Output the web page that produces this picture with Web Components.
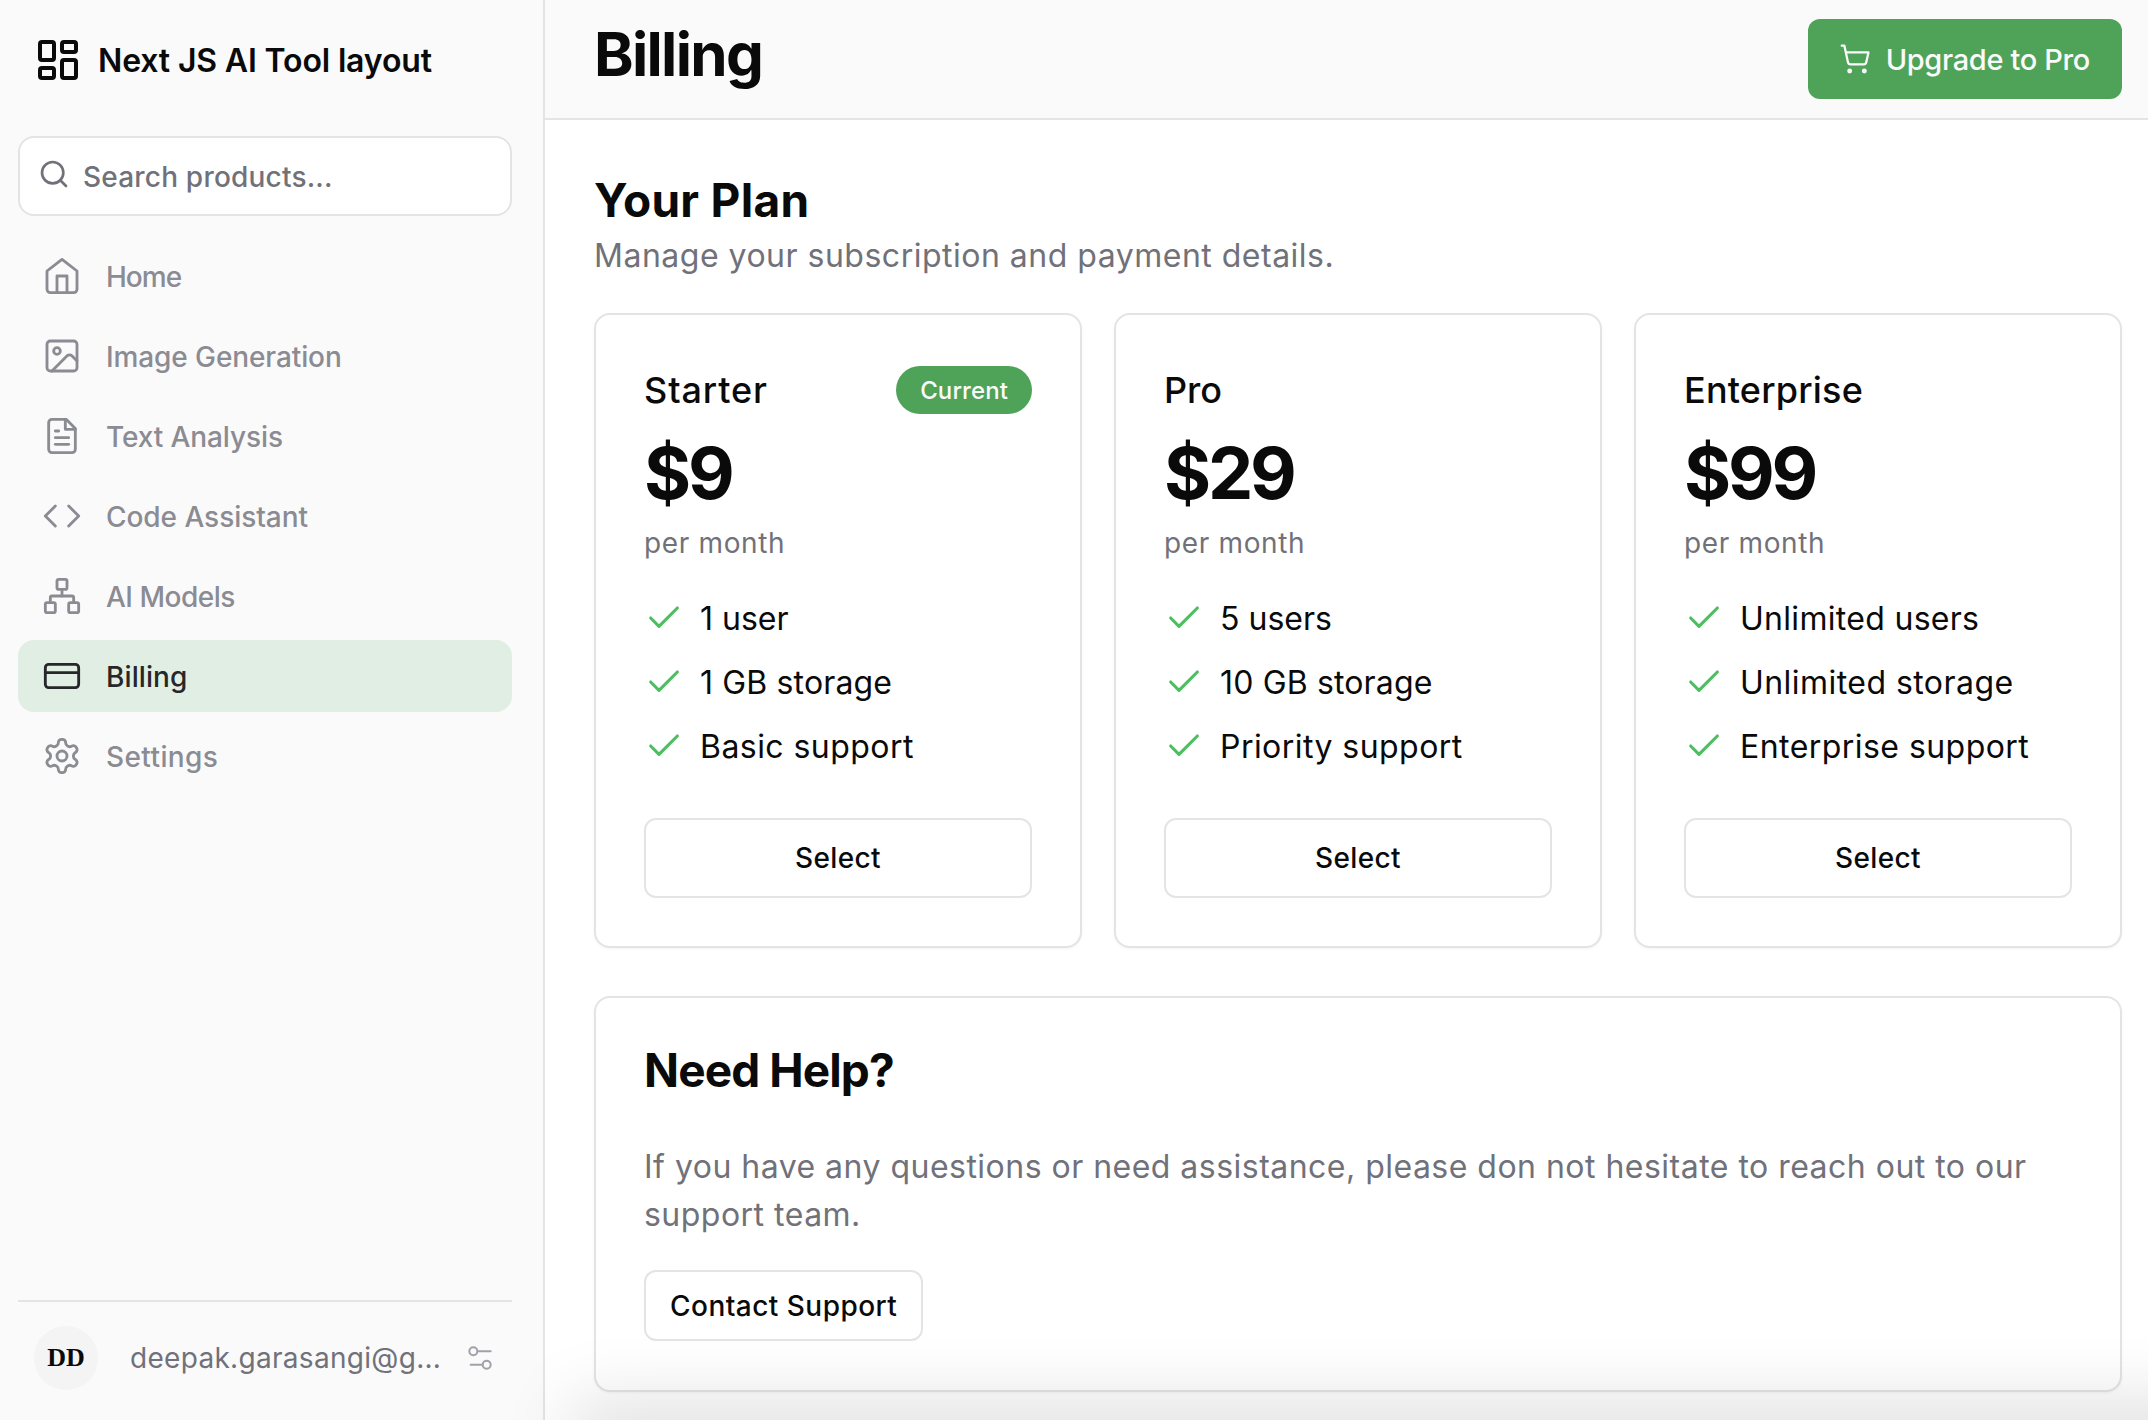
<!DOCTYPE html>
<html>
<head>
<meta charset="utf-8">
<title>Billing</title>
<style>
  html, body { margin: 0; height: 100%; }
  body { font-family: Inter, "Noto Sans", sans-serif; color: #0a0a0a; background: #fff; }
</style>
</head>
<body>
<app-shell>
  <side-bar slot="side">
    <nav-item icon="home" style="--ls:-1px">Home</nav-item>
    <nav-item icon="image" style="--ls:-.1px">Image Generation</nav-item>
    <nav-item icon="file" style="--ls:-.1px">Text Analysis</nav-item>
    <nav-item icon="code" style="--ls:-.05px">Code Assistant</nav-item>
    <nav-item icon="network" style="--ls:-.5px">AI Models</nav-item>
    <nav-item icon="card" active style="--ls:.1px">Billing</nav-item>
    <nav-item icon="gear" style="--ls:.4px">Settings</nav-item>
  </side-bar>
  <page-header slot="head" title="Billing"></page-header>
  <section-title>
    <span slot="title">Your Plan</span>
    Manage your subscription and payment details.
  </section-title>
  <plan-grid>
    <plan-card name="Starter" price="$9" current style="--name-ls:.9px">
      <plan-feature style="--ls:0">1 user</plan-feature>
      <plan-feature style="--ls:.15px">1 GB storage</plan-feature>
      <plan-feature>Basic support</plan-feature>
    </plan-card>
    <plan-card name="Pro" price="$29" style="--name-ls:0">
      <plan-feature style="--ls:0">5 users</plan-feature>
      <plan-feature style="--ls:.15px">10 GB storage</plan-feature>
      <plan-feature>Priority support</plan-feature>
    </plan-card>
    <plan-card name="Enterprise" price="$99" style="--name-ls:.2px">
      <plan-feature style="--ls:.3px">Unlimited users</plan-feature>
      <plan-feature>Unlimited storage</plan-feature>
      <plan-feature>Enterprise support</plan-feature>
    </plan-card>
  </plan-grid>
  <help-card>If you have any questions or need assistance, please don not hesitate to reach out to our support team.</help-card>
</app-shell>

<script>
const ICONS = {
  home: '<path d="m3 9 9-7 9 7v11a2 2 0 0 1-2 2H5a2 2 0 0 1-2-2z"/><polyline points="9 22 9 12 15 12 15 22"/>',
  image: '<rect x="3" y="3" width="18" height="18" rx="2"/><circle cx="9" cy="9" r="2"/><path d="m21 15-3.086-3.086a2 2 0 0 0-2.828 0L6 21"/>',
  file: '<path d="M14.5 2H6a2 2 0 0 0-2 2v16a2 2 0 0 0 2 2h12a2 2 0 0 0 2-2V7.5L14.5 2z"/><polyline points="14 2 14 8 20 8"/><line x1="16" y1="13" x2="8" y2="13"/><line x1="16" y1="17" x2="8" y2="17"/><line x1="10" y1="9" x2="8" y2="9"/>',
  code: '<polyline points="16 18 22 12 16 6"/><polyline points="8 6 2 12 8 18"/>',
  network: '<rect x="16" y="16" width="6" height="6" rx="1"/><rect x="2" y="16" width="6" height="6" rx="1"/><rect x="9" y="2" width="6" height="6" rx="1"/><path d="M5 16v-3a1 1 0 0 1 1-1h12a1 1 0 0 1 1 1v3"/><path d="M12 12V8"/>',
  card: '<rect x="2" y="5" width="20" height="14" rx="2"/><line x1="2" y1="10" x2="22" y2="10"/>',
  gear: '<path d="M12.22 2h-.44a2 2 0 0 0-2 2v.18a2 2 0 0 1-1 1.73l-.43.25a2 2 0 0 1-2 0l-.15-.08a2 2 0 0 0-2.73.73l-.22.38a2 2 0 0 0 .73 2.73l.15.1a2 2 0 0 1 1 1.72v.51a2 2 0 0 1-1 1.74l-.15.09a2 2 0 0 0-.73 2.73l.22.38a2 2 0 0 0 2.73.73l.15-.08a2 2 0 0 1 2 0l.43.25a2 2 0 0 1 1 1.73V20a2 2 0 0 0 2 2h.44a2 2 0 0 0 2-2v-.18a2 2 0 0 1 1-1.73l.43-.25a2 2 0 0 1 2 0l.15.08a2 2 0 0 0 2.73-.73l.22-.39a2 2 0 0 0-.73-2.73l-.15-.08a2 2 0 0 1-1-1.74v-.5a2 2 0 0 1 1-1.74l.15-.09a2 2 0 0 0 .73-2.73l-.22-.38a2 2 0 0 0-2.73-.73l-.15.08a2 2 0 0 1-2 0l-.43-.25a2 2 0 0 1-1-1.73V4a2 2 0 0 0-2-2z"/><circle cx="12" cy="12" r="3"/>',
  logo: '<rect x="3" y="3" width="7" height="9" rx="1"/><rect x="14" y="3" width="7" height="5" rx="1"/><rect x="14" y="12" width="7" height="9" rx="1"/><rect x="3" y="16" width="7" height="5" rx="1"/>',
  search: '<circle cx="11" cy="11" r="8"/><path d="m21 21-4.3-4.3"/>',
  sliders: '<path d="M20 7h-9"/><path d="M14 17H5"/><circle cx="17" cy="17" r="3"/><circle cx="7" cy="7" r="3"/>',
  cart: '<circle cx="8" cy="21" r="1"/><circle cx="19" cy="21" r="1"/><path d="M2.05 2.05h2l2.66 12.42a2 2 0 0 0 2 1.58h9.78a2 2 0 0 0 1.95-1.57l1.65-7.43H5.12"/>',
  check: '<polyline points="20 6 9 17 4 12"/>'
}

function svg(name, size, stroke) {
  return `<svg xmlns="http://www.w3.org/2000/svg" width="${size}" height="${size}" viewBox="0 0 24 24" fill="none" stroke="currentColor" stroke-width="${stroke}" stroke-linecap="round" stroke-linejoin="round">${ICONS[name]}</svg>`
}

class Base extends HTMLElement {
  constructor() {
    super()
    this.attachShadow({ mode: 'open' })
  }
  connectedCallback() {
    this.shadowRoot.innerHTML = this.template
  }
}

class AppShell extends Base {
  get template() {
    return `
      <style>
        :host { display: grid; grid-template-columns: 545px 1fr; grid-template-rows: 120px 1fr; height: 100vh; overflow: hidden; position: relative; }
        .side { grid-row: 1 / 3; display: flex; min-height: 0; }
        .head { display: block; }
        main { padding: 46px 26px 0 49px; background: #fff; min-width: 0; }
        .fade { position: absolute; left: 590px; right: -200px; top: 100%; height: 40px; pointer-events: none;
          box-shadow: 0 0 70px 20px rgba(0,0,0,.12); }
      </style>
      <div class="side"><slot name="side"></slot></div>
      <div class="head"><slot name="head"></slot></div>
      <main><slot></slot></main>
      <div class="fade"></div>
    `
  }
}

class SideBar extends Base {
  get template() {
    return `
      <style>
        :host { display: flex; flex-direction: column; flex: 1; box-sizing: border-box; background: #fafafa; border-right: 2px solid #e4e4e7; padding: 0 31px 0 18px; }
        .brand { display: flex; align-items: center; gap: 16px; height: 120px; padding-left: 16px; font-size: 32px; font-weight: 600; letter-spacing: -.15px; color: #0a0a0a; }
        .search { display: flex; align-items: center; gap: 13px; height: 80px; margin-top: 16px; box-sizing: border-box; padding: 0 18px; background: #fff; border: 2px solid #e4e4e7; border-radius: 16px; color: #71717a; font-size: 28px; font-weight: 500; letter-spacing: .2px; }
        .search svg { margin-top: -4px; }
        .search span { margin-top: 1px; }
        nav { display: flex; flex-direction: column; gap: 8px; margin-top: 24px; flex: 1; }
        footer { display: flex; align-items: center; height: 114px; margin-bottom: 6px; box-sizing: border-box; border-top: 2px solid #e4e4e7; padding-left: 16px; color: #71717a; font-size: 28px; letter-spacing: .3px; }
        .avatar { width: 64px; height: 64px; border-radius: 50%; background: #f4f4f5; color: #0a0a0a; display: flex; align-items: center; justify-content: center; font: 700 26px "Liberation Serif", serif; letter-spacing: 0; flex: none; }
        .mail { margin-left: 32px; flex: 1; white-space: nowrap; }
        .tune { color: #a1a1aa; margin-right: 16px; display: flex; }
      </style>
      <div class="brand">${svg('logo', 48, 2)}<span>Next JS AI Tool layout</span></div>
      <div class="search">${svg('search', 32, 2)}<span>Search products...</span></div>
      <nav><slot></slot></nav>
      <footer>
        <div class="avatar">DD</div>
        <span class="mail">deepak.garasangi@g...</span>
        <span class="tune">${svg('sliders', 32, 1.5)}</span>
      </footer>
    `
  }
}

class NavItem extends Base {
  get template() {
    const active = this.hasAttribute('active')
    return `
      <style>
        :host { display: flex; align-items: center; gap: 24px; height: 72px; padding-left: 24px; border-radius: 16px; font-size: 28px; font-weight: 500; letter-spacing: var(--ls, 0); color: ${active ? '#27272a' : '#8b8b93'}; background: ${active ? '#e1eee4' : 'transparent'}; }
        svg { flex: none; }
        span { margin-top: 2px; }
      </style>
      ${svg(this.getAttribute('icon'), 40, 1.7)}<span><slot></slot></span>
    `
  }
}

class PageHeader extends Base {
  get template() {
    return `
      <style>
        :host { display: flex; align-items: center; justify-content: space-between; box-sizing: border-box; height: 120px; background: #fafafa; border-bottom: 2px solid #e4e4e7; padding: 0 26px 0 49px; }
        h1 { margin: -10px 0 0; font-size: 60px; font-weight: 700; letter-spacing: -1.7px; color: #0a0a0a; line-height: 1; }
        .upgrade { display: flex; align-items: center; gap: 15px; height: 80px; margin-top: -1px; box-sizing: border-box; padding: 0 32px 0 31px; background: #4fa358; color: #fafafa; border-radius: 12px; font-size: 29px; font-weight: 500; letter-spacing: -.35px; }
        .upgrade span { margin-top: 1px; }
      </style>
      <h1>${this.getAttribute('title')}</h1>
      <div class="upgrade">${svg('cart', 32, 1.7)}<span>Upgrade to Pro</span></div>
    `
  }
}

class SectionTitle extends Base {
  get template() {
    return `
      <style>
        :host { display: block; margin-bottom: 33px; }
        h2 { margin: 0; font-size: 46px; line-height: 69px; font-weight: 700; letter-spacing: .3px; }
        p { margin: -3px 0 0; font-size: 32px; line-height: 48px; color: #71717a; letter-spacing: .5px; }
      </style>
      <h2><slot name="title"></slot></h2>
      <p><slot></slot></p>
    `
  }
}

class PlanGrid extends Base {
  get template() {
    return `
      <style>
        :host { display: grid; grid-template-columns: repeat(3, 1fr); gap: 32px; }
      </style>
      <slot></slot>
    `
  }
}

class PlanCard extends Base {
  get template() {
    const badge = this.hasAttribute('current') ? '<span class="badge">Current</span>' : ''
    return `
      <style>
        :host { display: block; box-sizing: border-box; height: 635px; padding: 48px; background: #fff; border: 2px solid #e4e4e7; border-radius: 16px; box-shadow: 0 1px 3px rgba(0,0,0,.05); }
        .top { display: flex; align-items: center; justify-content: space-between; height: 54px; font-size: 36px; font-weight: 500; letter-spacing: var(--name-ls, 0); }
        .badge { display: flex; align-items: center; height: 48px; padding: 0 24px; border-radius: 24px; background: #4fa358; color: #fafafa; font-size: 24px; font-weight: 500; letter-spacing: .1px; }
        .price { margin-top: 6px; font-size: 72px; line-height: 100px; font-weight: 700; letter-spacing: -3.2px; }
        .per { margin-top: -1px; font-size: 28px; line-height: 42px; color: #71717a; letter-spacing: .65px; }
        .features { display: flex; flex-direction: column; gap: 16px; margin-top: 30px; }
        button { display: block; width: 100%; height: 80px; margin-top: 48px; background: #fff; color: #0a0a0a; border: 2px solid #e4e4e7; border-radius: 12px; font: 500 28px Inter, sans-serif; letter-spacing: .4px; }
      </style>
      <div class="top"><span>${this.getAttribute('name')}</span>${badge}</div>
      <div class="price">${this.getAttribute('price')}</div>
      <div class="per">per month</div>
      <div class="features"><slot></slot></div>
      <button>Select</button>
    `
  }
}

class PlanFeature extends Base {
  get template() {
    return `
      <style>
        :host { display: flex; align-items: center; gap: 16px; height: 48px; font-size: 32px; letter-spacing: var(--ls, .45px); color: #0a0a0a; }
        svg { color: #4cc061; flex: none; }
      </style>
      ${svg('check', 40, 1.9)}<span><slot></slot></span>
    `
  }
}

class HelpCard extends Base {
  get template() {
    return `
      <style>
        :host { display: block; box-sizing: border-box; margin-top: 48px; height: 396px; padding: 49px 48px 48px; background: #fff; border: 2px solid #e4e4e7; border-radius: 16px; box-shadow: 0 1px 3px rgba(0,0,0,.05); }
        h3 { margin: 0; font-size: 46px; line-height: 46px; font-weight: 700; letter-spacing: -.9px; }
        p { margin: 50px 0 0; font-size: 32px; line-height: 48px; color: #71717a; letter-spacing: .48px; }
        button { display: block; height: 71px; margin-top: 31px; padding: 0 24px; background: #fff; color: #0a0a0a; border: 2px solid #e4e4e7; border-radius: 12px; font: 500 28px Inter, sans-serif; letter-spacing: .47px; }
      </style>
      <h3>Need Help?</h3>
      <p><slot></slot></p>
      <button>Contact Support</button>
    `
  }
}

customElements.define('app-shell', AppShell)
customElements.define('side-bar', SideBar)
customElements.define('nav-item', NavItem)
customElements.define('page-header', PageHeader)
customElements.define('section-title', SectionTitle)
customElements.define('plan-grid', PlanGrid)
customElements.define('plan-card', PlanCard)
customElements.define('plan-feature', PlanFeature)
customElements.define('help-card', HelpCard)
</script>
</body>
</html>
